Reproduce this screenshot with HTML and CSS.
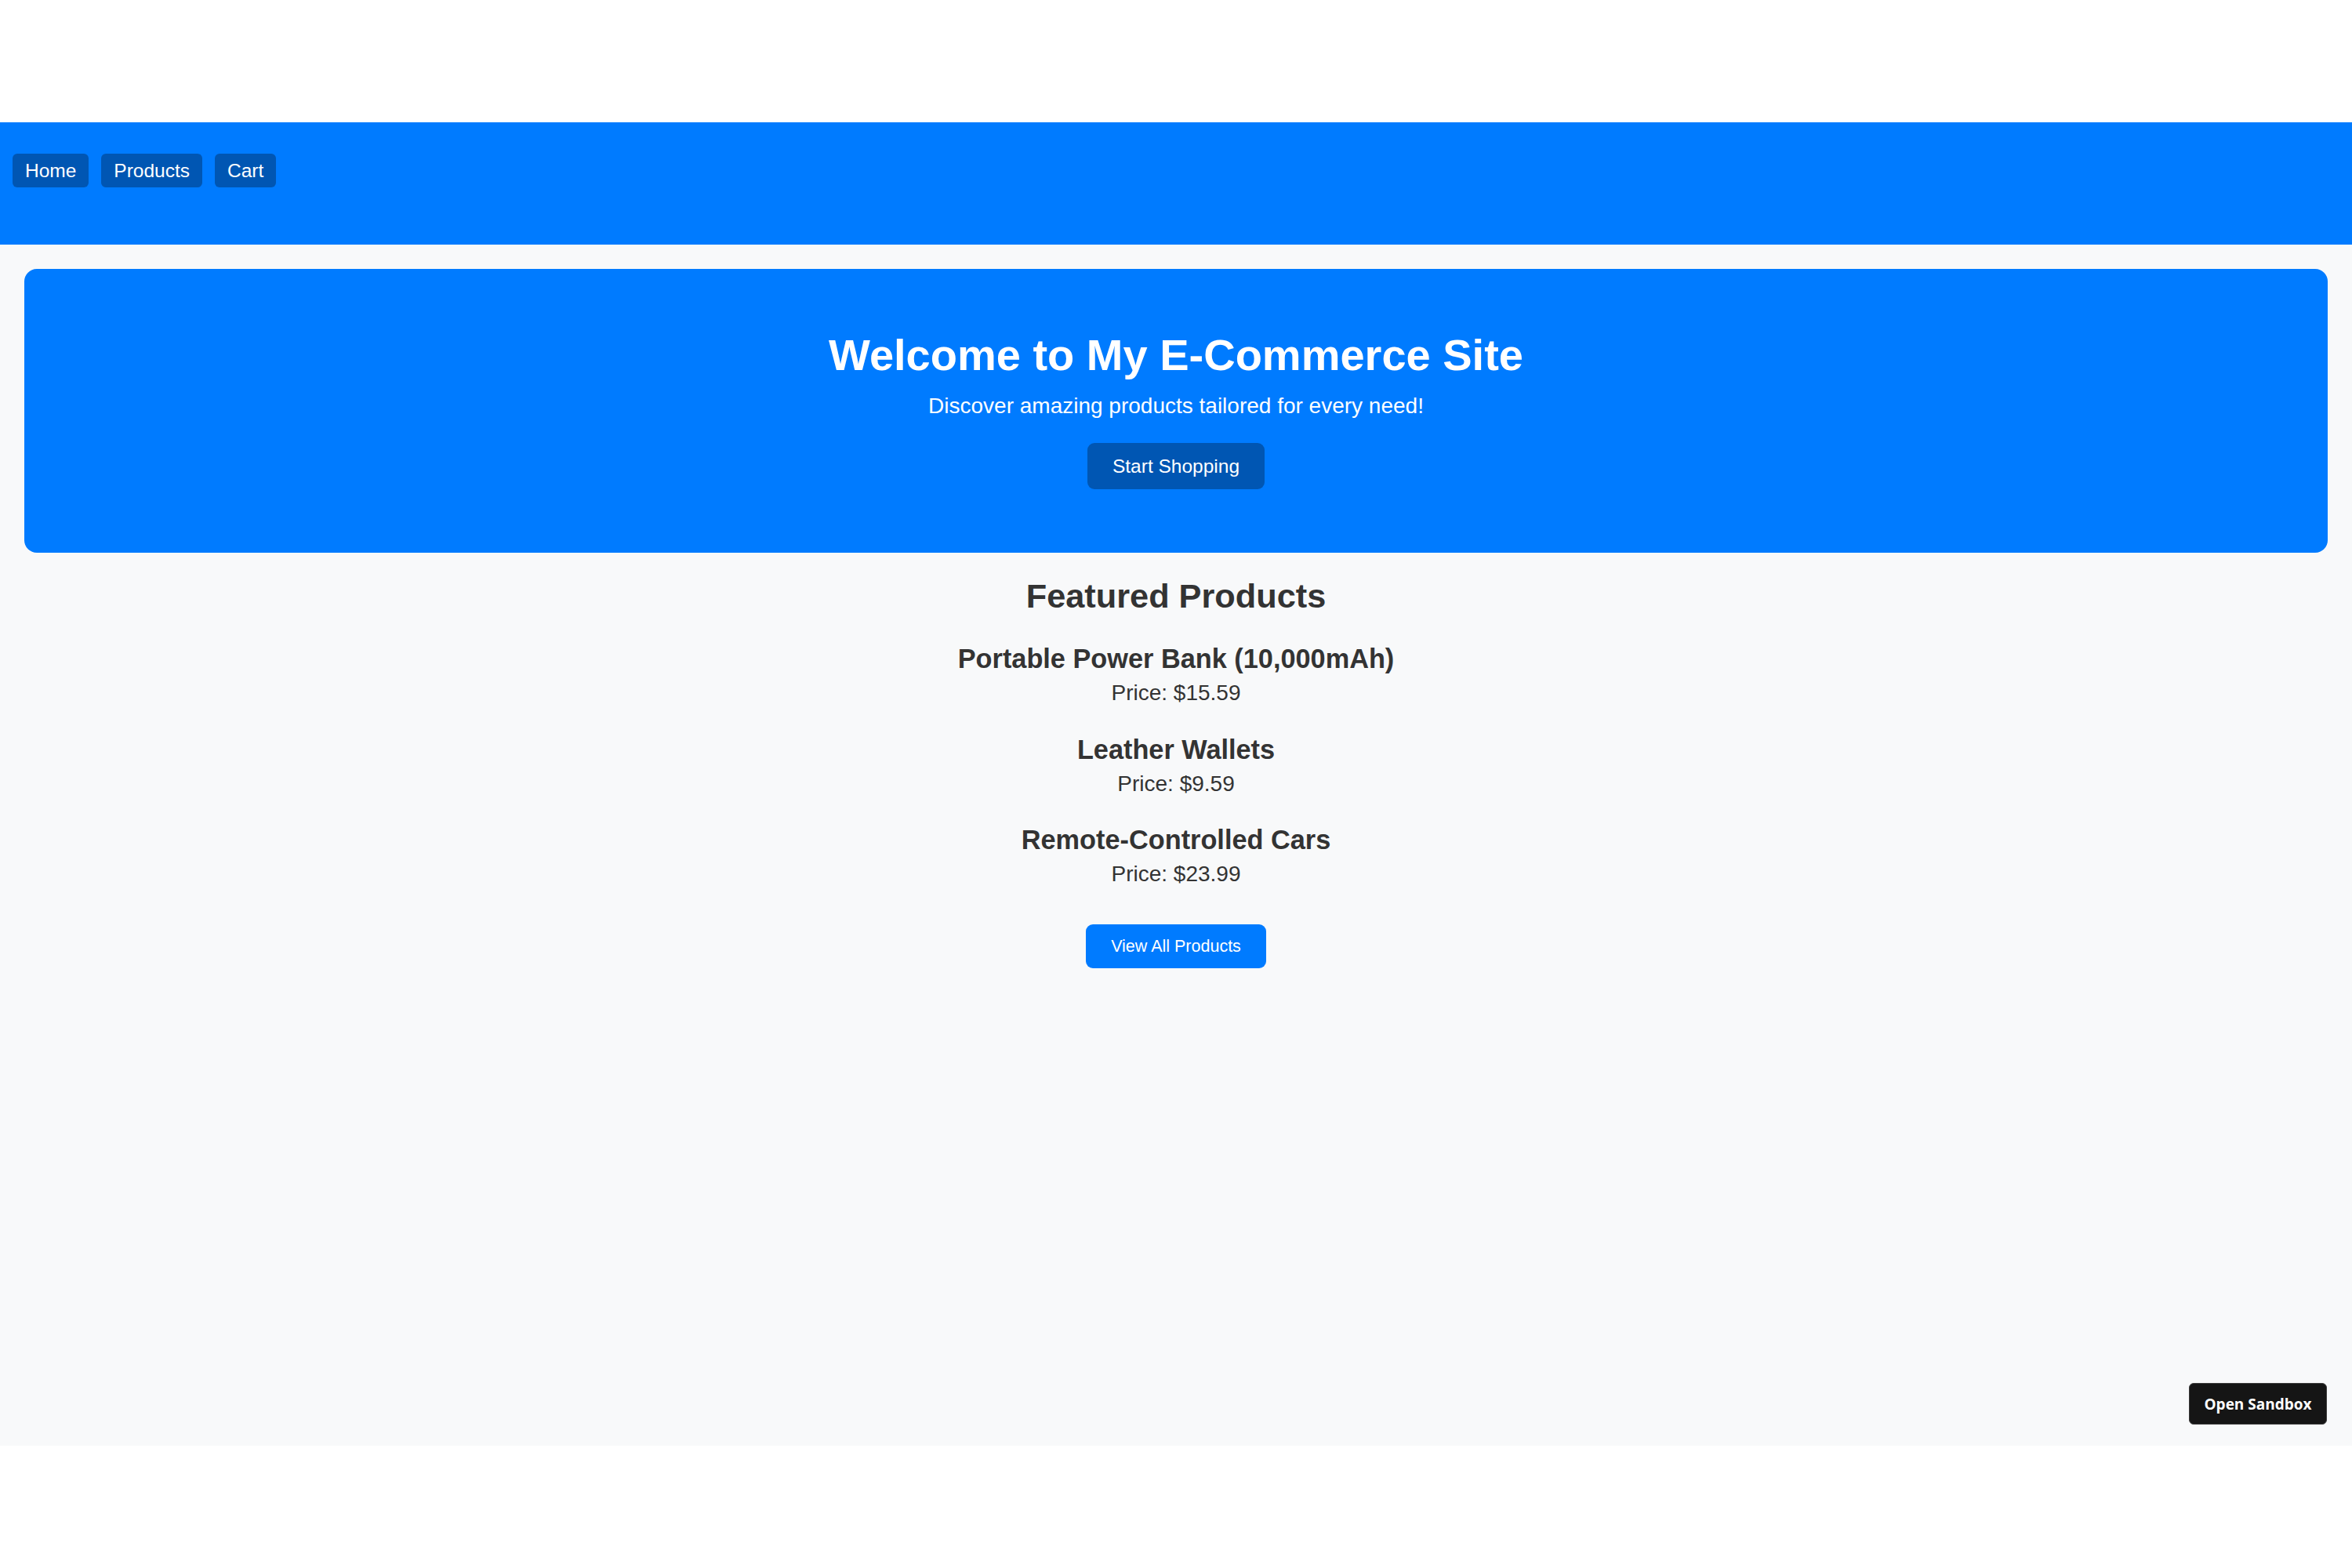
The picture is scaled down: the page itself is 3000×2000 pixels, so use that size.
FILE: index.html
```html
<!DOCTYPE html>
<html lang="en">
<head>
<meta charset="utf-8">
<title>My E-Commerce Site</title>
<link rel="stylesheet" href="styles.css">
</head>
<body>
<div class="frame">
  <header class="site-header">
    <nav class="nav">
      <a class="nav-link" href="#">Home</a>
      <a class="nav-link" href="#">Products</a>
      <a class="nav-link" href="#">Cart</a>
    </nav>
  </header>
  <section class="hero">
    <h1 class="hero-title">Welcome to My E-Commerce Site</h1>
    <p class="hero-sub">Discover amazing products tailored for every need!</p>
    <button class="btn-dark">Start Shopping</button>
  </section>
  <section class="featured">
    <h2 class="featured-title">Featured Products</h2>
    <div class="product">
      <h3 class="product-name">Portable Power Bank (10,000mAh)</h3>
      <p class="product-price">Price: $15.59</p>
    </div>
    <div class="product">
      <h3 class="product-name">Leather Wallets</h3>
      <p class="product-price">Price: $9.59</p>
    </div>
    <div class="product">
      <h3 class="product-name">Remote-Controlled Cars</h3>
      <p class="product-price">Price: $23.99</p>
    </div>
    <button class="btn-primary">View All Products</button>
  </section>
  <a class="open-sandbox" href="#">Open Sandbox</a>
</div>
</body>
</html>
```

FILE: styles.css
```css
* { box-sizing: border-box; }

html, body {
  margin: 0;
  padding: 0;
  background: #ffffff;
}

body {
  font-family: "Liberation Sans", Arial, sans-serif;
  color: #333333;
}

.frame {
  position: relative;
  margin-top: 156px;
  height: 1688px;
  background: #f8f9fa;
  overflow: hidden;
}

.site-header {
  background: #007bff;
  height: 156px;
  padding: 40px 16px 0;
}

.nav {
  display: flex;
  gap: 16px;
}

.nav-link {
  display: block;
  background: #0056b3;
  color: #ffffff;
  text-decoration: none;
  font-size: 24.5px;
  line-height: 28px;
  padding: 7.5px 16px;
  border-radius: 6px;
}

.hero {
  margin: 31px 31px 0;
  background: #007bff;
  color: #ffffff;
  border-radius: 16px;
  padding: 78px 20px 81px;
  display: flex;
  flex-direction: column;
  align-items: center;
  text-align: center;
}

.hero-title {
  margin: 0;
  font-size: 56px;
  line-height: 64px;
  font-weight: 700;
}

.hero-sub {
  margin: 17px 0 0;
  font-size: 28px;
  line-height: 32px;
}

.btn-dark {
  margin-top: 31px;
  border: none;
  background: #0056b3;
  color: #ffffff;
  font-family: "Liberation Sans", Arial, sans-serif;
  font-size: 24.5px;
  line-height: 28px;
  padding: 15.5px 32px;
  border-radius: 9px;
}

.featured {
  display: flex;
  flex-direction: column;
  align-items: center;
  text-align: center;
  padding-top: 30px;
}

.featured-title {
  margin: 0 0 35px;
  font-size: 43.3px;
  line-height: 50px;
  font-weight: 700;
  color: #333333;
}

.product {
  display: flex;
  flex-direction: column;
  align-items: center;
  margin-bottom: 35.5px;
}

.product:last-of-type {
  margin-bottom: 0;
}

.product-name {
  margin: 0 0 8px;
  font-size: 34.3px;
  line-height: 40px;
  font-weight: 700;
  color: #333333;
}

.product-price {
  margin: 0;
  font-size: 28px;
  line-height: 32px;
  color: #333333;
}

.btn-primary {
  margin-top: 48px;
  border: none;
  background: #007bff;
  color: #ffffff;
  font-family: "Liberation Sans", Arial, sans-serif;
  font-size: 21.5px;
  line-height: 25px;
  padding: 15.5px 32px;
  border-radius: 9px;
}

.open-sandbox {
  position: absolute;
  right: 32px;
  bottom: 27px;
  width: 176px;
  height: 53px;
  display: flex;
  align-items: center;
  justify-content: center;
  background: #151515;
  color: #ffffff;
  text-decoration: none;
  font-family: "Open Sans", "Noto Sans", sans-serif;
  font-weight: 700;
  font-size: 19px;
  border-radius: 6px;
  border: 1px solid #3a3a3a;
}
```
